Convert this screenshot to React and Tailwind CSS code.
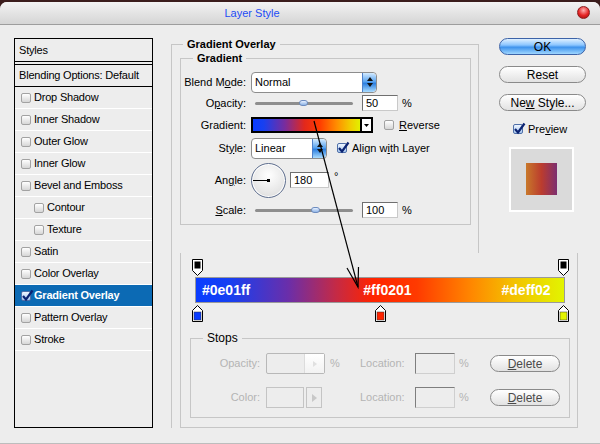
import React from "react";

const Check = ({ on }) => (
  <span
    className={`relative inline-flex w-[10px] h-[10px] shrink-0 rounded-[2px] border ${
      on
        ? "border-[#4f6fa8] bg-linear-to-b from-[#eef5ff] to-[#a9c9f0]"
        : "border-[#a2a2a2] bg-linear-to-b from-white to-[#d6d6d6]"
    }`}
  >
    {on && (
      <svg className="absolute -top-[3px] -left-[1px]" width="13" height="13" viewBox="0 0 13 13">
        <path d="M2 7 L5 10.5 L11.5 1.5" fill="none" stroke="#0b2372" strokeWidth="2.2" />
      </svg>
    )}
  </span>
);

const Stepper = () => (
  <div className="w-[14px] h-full rounded-r-[4px] border-l border-[#4d7fc8] bg-[linear-gradient(to_bottom,#d4ebff,#5aa4f0_45%,#2c7fe0_55%,#a9dcff)] flex flex-col items-center justify-center gap-[2px]">
    <svg width="6" height="4" viewBox="0 0 6 4"><path d="M3 0 L6 4 H0 Z" fill="#111" /></svg>
    <svg width="6" height="4" viewBox="0 0 6 4"><path d="M0 0 H6 L3 4 Z" fill="#111" /></svg>
  </div>
);

const Select = ({ w, value }) => (
  <div className={`${w} h-[21px] flex items-stretch rounded-[4px] border border-[#8d8d8d] bg-white overflow-hidden`}>
    <span className="flex-1 flex items-center pl-[3px] text-[11px]">{value}</span>
    <Stepper />
  </div>
);

const Slider = ({ thumb }) => (
  <div className="relative w-[98px] h-[3px] rounded-full bg-[#8e8e8e] ml-[4px]">
    <span className={`absolute -top-[2px] ${thumb} w-[9px] h-[6px] rounded-[3px] border border-[#6d8cbf] bg-linear-to-b from-[#e6f0ff] to-[#8fb4e6]`} />
  </div>
);

const Field = ({ value, w = "w-[36px]" }) => (
  <div className={`${w} h-[16px] border border-[#6f6f6f] border-r-[#c9c9c9] border-b-[#c9c9c9] bg-white pl-[3px] text-[11px] leading-[14px]`}>
    {value}
  </div>
);

const Label = ({ children }) => (
  <span className="w-[63px] shrink-0 flex justify-end pr-[5px] text-[11px] whitespace-nowrap">
    <span>{children}</span>
  </span>
);

const TopMarker = () => (
  <svg width="11" height="17" viewBox="0 0 11 17">
    <path d="M0.5 0.5 H10.5 V11.5 L5.5 16.5 L0.5 11.5 Z" fill="#fff" stroke="#000" />
    <rect x="2.5" y="2.5" width="6" height="7" fill="#000" />
  </svg>
);

const BottomMarker = ({ color }) => (
  <svg width="11" height="17" viewBox="0 0 11 17">
    <path d="M5.5 0.5 L10.5 5.5 V16.5 H0.5 V5.5 Z" fill="#fff" stroke="#000" />
    <rect x="2" y="7" width="7" height="8" fill={color} stroke="#333" strokeWidth="0.5" />
  </svg>
);

const PillButton = ({ children, blue }) => (
  <div
    className={`h-[17px] flex items-center justify-center rounded-full border text-[12px] ${
      blue
        ? "border-[#3c63a8] bg-[linear-gradient(to_bottom,#dff0ff,#8cc6ff_40%,#3f93ec_55%,#9ed6ff)] text-black"
        : "border-[#8a8a8a] bg-linear-to-b from-white to-[#e2e2e2]"
    }`}
  >
    <span className="whitespace-pre">{children}</span>
  </div>
);

const styles = [
  ["Drop Shadow"],
  ["Inner Shadow"],
  ["Outer Glow"],
  ["Inner Glow"],
  ["Bevel and Emboss"],
  ["Contour", true],
  ["Texture", true],
  ["Satin"],
  ["Color Overlay"],
  ["Gradient Overlay", false, true],
  ["Pattern Overlay"],
  ["Stroke"],
];

export default function App() {
  return (
    <div className="relative w-[600px] h-[444px] overflow-hidden bg-[#3b1d1c] font-['Liberation_Sans',Arial,sans-serif] text-black select-none">
      <div className="h-[2px]" />
      <div className="h-[442px] rounded-t-[7px] bg-[#ededed] flex flex-col border-b border-[#bdbdbd]">
        {/* title bar */}
        <div className="relative h-[23px] shrink-0 rounded-t-[7px] border-b border-[#9d9d9d] bg-linear-to-b from-[#f3f3f3] to-[#d5d5d5] flex items-center">
          <span className="w-[504px] pt-[1px] text-center text-[11px] text-[#1d4cf5]">Layer Style</span>
          <span className="absolute right-[10px] top-[4px] w-[13px] h-[13px] rounded-full border border-[#8c1d1d] bg-[radial-gradient(circle_at_50%_30%,#ffb0b0,#e52424_55%,#9a0c0c)]" />
        </div>

        {/* body */}
        <div className="flex">
          {/* left styles list */}
          <div className="ml-[14px] mt-[13px] w-[139px] h-[390px] border border-black flex flex-col text-[11px] tracking-[-0.2px]">
            <div className="h-[23px] border-b border-black flex items-center pl-[4px]">Styles</div>
            <div className="h-[2px]" />
            <div className="h-[23px] border-y border-black flex items-center pl-[4px]">Blending Options: Default</div>
            {styles.map(([name, sub, sel]) => (
              <div
                key={name}
                className={`h-[22px] flex items-center gap-[3px] border-b border-white ${
                  sub ? "pl-[19px]" : "pl-[6px]"
                } ${sel ? "bg-[#0c6ab4] text-white font-bold" : ""}`}
              >
                <Check on={sel} />
                <span>{name}</span>
              </div>
            ))}
          </div>

          {/* rest */}
          <div className="ml-[18px] mt-[13px] flex flex-col">
            <div className="flex">
              {/* Gradient Overlay fieldset */}
              <fieldset className="w-[308px] h-[215px] border border-b-0 border-[#c6c6c6] pl-[8px]">
                <legend className="ml-[3px] px-[4px] text-[11px] font-bold leading-[13px]">Gradient Overlay</legend>
                <fieldset className="mt-[1px] w-[291px] h-[173px] border border-[#c6c6c6] pl-[7px]">
                  <legend className="ml-[5px] px-[4px] text-[11px] font-bold leading-[13px]">Gradient</legend>
                  <div className="mt-[6px] flex flex-col">
                    <div className="h-[22px] flex items-center">
                      <Label>Blend M<span className="underline">o</span>de:</Label>
                      <Select w="w-[126px]" value="Normal" />
                    </div>
                    <div className="h-[20px] flex items-center">
                      <Label>O<span className="underline">p</span>acity:</Label>
                      <Slider thumb="left-[44px]" />
                      <div className="ml-[9px]"><Field value="50" /></div>
                      <span className="ml-[4px] text-[11px]">%</span>
                    </div>
                    <div className="h-[24px] flex items-center">
                      <Label>Gradient:</Label>
                      <div className="w-[111px] h-[16px] border-2 border-black bg-[linear-gradient(to_right,#0a3cff,#1840f0_10%,#7a2c9c_30%,#e2281c_48%,#ff3a00_62%,#ff8c00_78%,#f2c800_90%,#e2f000)]" />
                      <div className="w-[11px] h-[16px] border-2 border-l-0 border-black bg-white flex items-center justify-center">
                        <svg width="5" height="3" viewBox="0 0 5 3"><path d="M0 0 H5 L2.5 3 Z" fill="#000" /></svg>
                      </div>
                      <span className="ml-[11px]"><Check /></span>
                      <span className="ml-[5px] text-[11px]"><span className="underline">R</span>everse</span>
                    </div>
                    <div className="h-[22px] flex items-center">
                      <Label>St<span className="underline">y</span>le:</Label>
                      <Select w="w-[76px]" value="Linear" />
                      <span className="ml-[10px]"><Check on /></span>
                      <span className="ml-[5px] text-[11px]">Align w<span className="underline">i</span>th Layer</span>
                    </div>
                    <div className="h-[42px] flex items-center">
                      <Label>An<span className="underline">g</span>le:</Label>
                      <div className="relative w-[35px] h-[35px] rounded-full border border-[#5f6f8f] bg-[radial-gradient(circle_at_50%_35%,#ffffff,#e4e4e4_70%,#cfcfcf)] shadow-[inset_0_0_0_1px_#ffffff]">
                        <span className="absolute left-[1px] top-[16px] w-[16px] h-[1px] bg-black" />
                        <span className="absolute left-[15px] top-[15px] w-[3px] h-[3px] bg-black" />
                      </div>
                      <div className="ml-[4px]"><Field value="180" w="w-[39px]" /></div>
                      <span className="ml-[5px] mb-[8px] text-[11px]">°</span>
                    </div>
                    <div className="h-[18px] flex items-center">
                      <Label><span className="underline">S</span>cale:</Label>
                      <Slider thumb="left-[56px]" />
                      <div className="ml-[9px]"><Field value="100" /></div>
                      <span className="ml-[4px] text-[11px]">%</span>
                    </div>
                  </div>
                </fieldset>
              </fieldset>

              {/* buttons column */}
              <div className="ml-[20px] w-[87px] flex flex-col">
                <PillButton blue>OK</PillButton>
                <div className="mt-[11px]"><PillButton>Reset</PillButton></div>
                <div className="mt-[11px]"><PillButton>Ne<span className="underline">w</span> Style...</PillButton></div>
                <div className="mt-[10px] ml-[14px] flex items-center gap-[5px] text-[11px]">
                  <Check on />
                  <span>Pre<span className="underline">v</span>iew</span>
                </div>
                <div className="mt-[9px] ml-[10px] w-[65px] h-[65px] border-2 border-white bg-[#dadada] flex items-center justify-center">
                  <div className="w-[31px] h-[32px] bg-[linear-gradient(to_right,#c8782a,#bb3c2e_50%,#7c2e70)]" />
                </div>
              </div>
            </div>

            {/* gradient editor */}
            <div className="border-l border-[#c6c6c6] h-[175px] pl-[8px]">
              <div className="w-[398px] h-[175px] border-x border-b border-[#c6c6c6] flex flex-col">
                <div className="mt-[6px] ml-[11px] w-[377px] flex justify-between">
                  <TopMarker />
                  <TopMarker />
                </div>
                <div className="mt-[1px] ml-[14px] w-[370px] h-[26px] border border-[#9a9a9a] bg-[linear-gradient(to_right,#0a3cff,#1540f2_9%,#6a2eaa_25%,#c42a46_38%,#ff2400_48%,#ff3a00_60%,#ff8800_75%,#f4c000_86%,#e2f400)] flex items-center text-white font-bold text-[14px]">
                  <span className="ml-[6px]">#0e01ff</span>
                  <span className="ml-[113px]">#ff0201</span>
                  <span className="ml-[90px]">#deff02</span>
                </div>
                <div className="mt-[2px] ml-[11px] w-[377px] flex justify-between">
                  <BottomMarker color="#0a3cff" />
                  <BottomMarker color="#ff2400" />
                  <BottomMarker color="#e2f400" />
                </div>

                <fieldset className="mt-[9px] ml-[9px] w-[380px] h-[87px] border border-[#c6c6c6] pl-[12px]">
                  <legend className="px-[4px] text-[12px] leading-[14px]">Stops</legend>
                  <div className="mt-[8px] h-[21px] flex items-center text-[11px] text-[#b4b4b4]">
                    <span className="w-[57px] text-right">Opacity:</span>
                    <div className="ml-[6px] w-[94px] flex items-center">
                      <div className="w-[59px] h-[21px] flex border border-[#b8b8b8] rounded-[2px]">
                        <div className="flex-1" />
                        <div className="w-[20px] h-full bg-linear-to-b from-white to-[#f2f2f2] border-l border-[#dcdcdc] flex items-center justify-center">
                          <svg width="4" height="6" viewBox="0 0 4 6"><path d="M0 0 L4 3 L0 6 Z" fill="#e0e0e0" /></svg>
                        </div>
                      </div>
                      <span className="ml-[5px]">%</span>
                    </div>
                    <span className="w-[50px]">Location:</span>
                    <div className="ml-[5px] w-[40px] h-[21px] border border-[#7e7e7e] border-r-[#cfcfcf] border-b-[#cfcfcf]" />
                    <span className="ml-[4px] w-[31px]">%</span>
                    <div className="w-[70px] text-[#4a4a4a]"><PillButton><span className="underline">D</span>elete</PillButton></div>
                  </div>
                  <div className="mt-[13px] h-[21px] flex items-center text-[11px] text-[#b4b4b4]">
                    <span className="w-[57px] text-right">Color:</span>
                    <div className="ml-[6px] w-[94px] flex items-center">
                      <div className="w-[38px] h-[21px] border border-[#c4c4c4]" />
                      <div className="ml-[2px] w-[16px] h-[21px] border border-[#c4c4c4] flex items-center justify-center">
                        <svg width="5" height="8" viewBox="0 0 5 8"><path d="M0 0 L5 4 L0 8 Z" fill="#c8c8c8" /></svg>
                      </div>
                    </div>
                    <span className="w-[50px]">Location:</span>
                    <div className="ml-[5px] w-[40px] h-[21px] border border-[#7e7e7e] border-r-[#cfcfcf] border-b-[#cfcfcf]" />
                    <span className="ml-[4px] w-[31px]">%</span>
                    <div className="w-[70px] text-[#4a4a4a]"><PillButton><span className="underline">D</span>elete</PillButton></div>
                  </div>
                </fieldset>
              </div>
            </div>
          </div>
        </div>
      </div>

      {/* pointer arrow drawn over the dialog */}
      <svg className="absolute left-0 top-0 pointer-events-none" width="600" height="444">
        <path d="M314 121 L358 287" stroke="#000" strokeWidth="1.2" fill="none" />
        <path d="M347 268 L358 287 L358.5 267" stroke="#000" strokeWidth="1.2" fill="none" />
      </svg>
    </div>
  );
}
